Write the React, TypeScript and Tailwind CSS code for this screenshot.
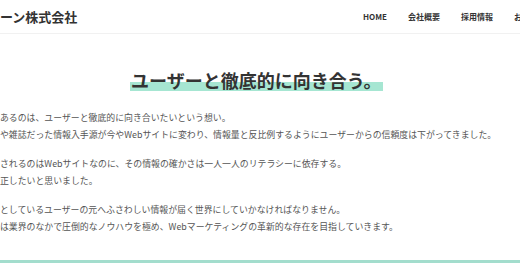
import React from "react";

const navItems: string[] = ["HOME", "会社概要", "採用情報", "お問い合わせ"];

const paragraphs: string[][] = [
  [
    "あるのは、ユーザーと徹底的に向き合いたいという想い。",
    "や雑誌だった情報入手源が今やWebサイトに変わり、情報量と反比例するようにユーザーからの信頼度は下がってきました。",
  ],
  [
    "されるのはWebサイトなのに、その情報の確かさは一人一人のリテラシーに依存する。",
    "正したいと思いました。",
  ],
  [
    "としているユーザーの元へふさわしい情報が届く世界にしていかなければなりません。",
    "は業界のなかで圧倒的なノウハウを極め、Webマーケティングの革新的な存在を目指していきます。",
  ],
];

const App: React.FC = () => {
  return (
    <div className="w-[520px] h-[273px] overflow-hidden bg-white font-['Noto_Sans_CJK_JP','Noto_Sans',sans-serif]">
      {/* header */}
      <header className="h-[34px] flex items-center border-b border-[#f1f1f1] whitespace-nowrap">
        <div className="w-[78px] shrink-0 text-[13px] font-bold text-[#333]">
          ーン株式会社
        </div>
        <nav className="ml-[285px] flex gap-[21px] shrink-0 text-[8px] font-bold text-[#333]">
          {navItems.map((item) => (
            <span key={item}>{item}</span>
          ))}
        </nav>
      </header>

      <main className="pt-[33px]">
        <h2 className="pl-[130px] text-[18px] leading-[27px] font-bold text-[#333] whitespace-nowrap">
          <span className="px-[1px] bg-[linear-gradient(transparent_58%,#a6e6d2_58%,#a6e6d2_92%,transparent_92%)]">
            ユーザーと徹底的に向き合う。
          </span>
        </h2>

        <div className="mt-[15px] text-[8.9px] leading-[17px] text-[#555] whitespace-nowrap">
          {paragraphs.map((lines, i) => (
            <p key={i} className="mb-[12px]">
              {lines.map((line) => (
                <span key={line} className="block">
                  {line}
                </span>
              ))}
            </p>
          ))}
        </div>

        <div className="mt-[25px] h-[3px] bg-[#a3ddcd]" />
      </main>
    </div>
  );
};

export default App;
